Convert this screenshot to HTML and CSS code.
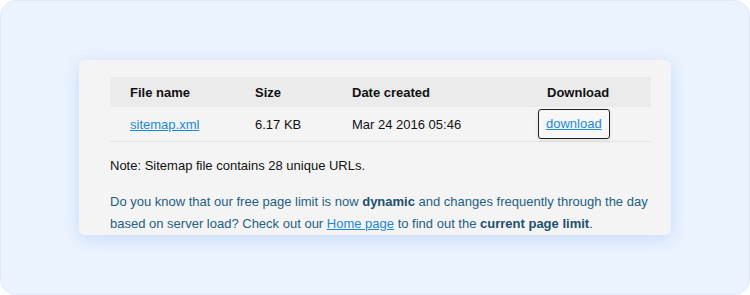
FILE: index.html
```html
<!DOCTYPE html>
<html>
<head>
<meta charset="utf-8">
<link rel="stylesheet" href="styles.css">
</head>
<body>
<div class="frame">
  <div class="card">
    <div class="table">
      <div class="row head">
        <div class="c1">File name</div>
        <div class="c2">Size</div>
        <div class="c3">Date created</div>
        <div class="c4">Download</div>
      </div>
      <div class="row body">
        <div class="c1"><a href="#">sitemap.xml</a></div>
        <div class="c2">6.17 KB</div>
        <div class="c3">Mar 24 2016 05:46</div>
        <div class="c4"><a class="btn" href="#">download</a></div>
      </div>
    </div>
    <p class="note">Note: Sitemap file contains 28 unique URLs.</p>
    <p class="info">Do you know that our free page limit is now <b>dynamic</b> and changes frequently through the day based on server load? Check out our <a href="#">Home page</a> to find out the <b>current page limit</b>.</p>
  </div>
</div>
</body>
</html>
```
FILE: styles.css
```css
* { box-sizing: border-box; }
html, body { margin: 0; padding: 0; background: #ffffff; }
body { font-family: "Liberation Sans", Arial, sans-serif; font-size: 13px; color: #111; }
.frame {
  width: 750px; height: 295px;
  background: #ebf3fe;
  border: 1px solid #dde9fb;
  border-radius: 16px;
  padding: 59px 0 0 78px;
  overflow: hidden;
}
.card {
  width: 592px;
  height: 175px;
  background: #f4f4f4;
  border-radius: 6px;
  padding: 17px 20px 0 31px;
  box-shadow: 0 4px 18px rgba(170, 200, 245, 0.55);
  overflow: hidden;
}
.table { width: 541px; }
.row { display: flex; align-items: center; }
.row.head { height: 30px; background: #ebebeb; font-weight: bold; }
.row.body { height: 35px; border-bottom: 1px solid #e4e4e4; }
.c1 { width: 145px; padding-left: 20px; }
.c2 { width: 97px; }
.c3 { width: 165px; }
.c4 { flex: 1; padding-left: 30px; }
.row.body .c4 { padding-left: 21px; }
a { color: #1a8ad4; }
.btn {
  display: inline-block;
  border: 1px solid #222;
  border-radius: 3px;
  padding: 6px 7px 7px 7px;
  line-height: 15px;
  box-shadow: 0 2px 4px rgba(0,0,0,0.08);
  background: #f7f7f7;
}
.note { margin: 16px 0 0 0; line-height: 16px; }
.info { margin: 17px 0 0 0; line-height: 22px; color: #235f84; }
.info b { color: #1d4f6f; }
```
